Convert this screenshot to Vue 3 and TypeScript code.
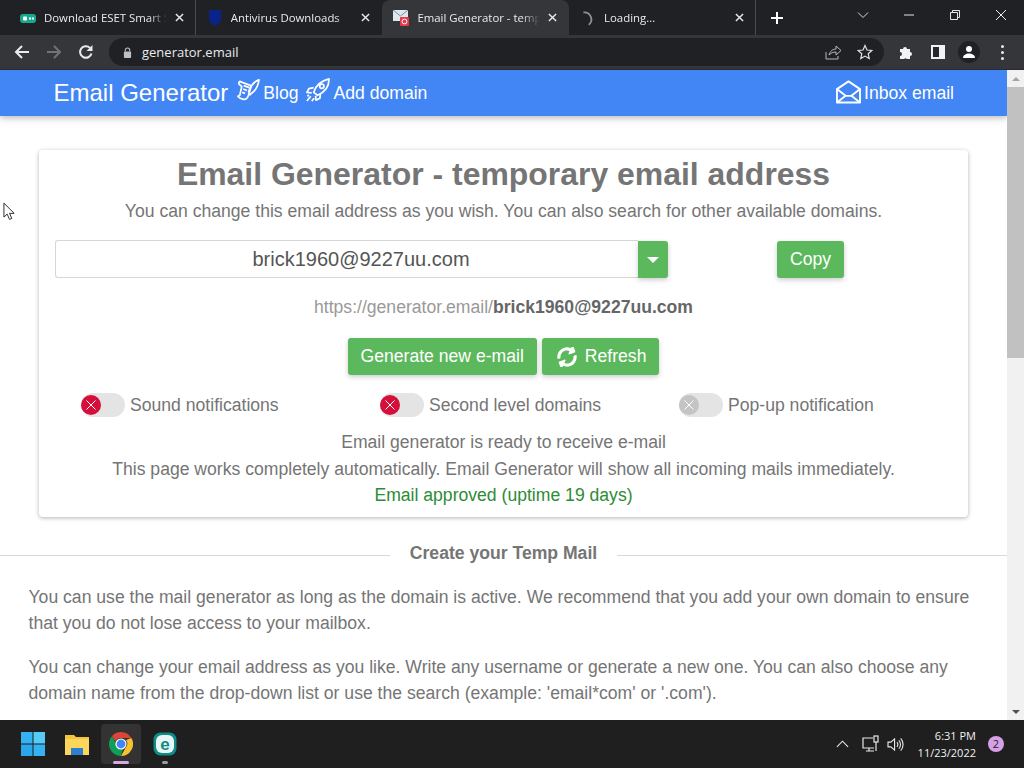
<script setup lang="ts">
interface BrowserTab {
  title: string;
  kind: 'eset' | 'shield' | 'mail' | 'spinner';
  active?: boolean;
}

const tabs: BrowserTab[] = [
  { title: 'Download ESET Smart Security', kind: 'eset' },
  { title: 'Antivirus Downloads', kind: 'shield' },
  { title: 'Email Generator - temporary email', kind: 'mail', active: true },
  { title: 'Loading...', kind: 'spinner' },
];

const toggles = [
  { label: 'Sound notifications', on: true },
  { label: 'Second level domains', on: true },
  { label: 'Pop-up notification', on: false },
];
</script>

<template>
  <div class="screen">
    <div class="tabbar">
      <div class="tabs">
        <div v-for="tab in tabs" :key="tab.title" class="tab" :class="{ active: tab.active }">
          <svg v-if="tab.kind === 'eset'" class="favicon" viewBox="0 0 16 16">
            <rect x="0" y="4" width="16" height="9" rx="3" fill="#17a98f" />
            <rect x="3" y="6.500" width="4" height="4" rx="1" fill="#fff" />
            <rect x="9" y="7.500" width="2" height="2" fill="#fff" />
            <rect x="12" y="7.500" width="2" height="2" fill="#fff" />
          </svg>
          <svg v-else-if="tab.kind === 'shield'" class="favicon" viewBox="0 0 16 16">
            <path d="M2 0h12v9c0 3-3 5-6 7-3-2-6-4-6-7z" fill="#0a2388" />
          </svg>
          <svg v-else-if="tab.kind === 'mail'" class="favicon" viewBox="0 0 16 16">
            <rect x="0" y="0" width="15" height="11" fill="#dfe6ee" />
            <path d="M0 0l7.500 6L15 0" fill="none" stroke="#7f8a96" />
            <rect x="7" y="7" width="9" height="9" rx="1" fill="#e53950" />
            <circle cx="11.500" cy="11.500" r="2.400" fill="none" stroke="#fff" />
          </svg>
          <svg v-else class="favicon" viewBox="0 0 16 16">
            <path d="M5 1.500a7 7 0 0 1 2 13.300" transform="rotate(-15 8 8)" fill="none" stroke="#8d9094" stroke-width="1.800" />
          </svg>
          <span class="tab-title">{{ tab.title }}</span>
          <svg class="tab-close" viewBox="0 0 10 10">
            <path d="M1 1l8 8M9 1l-8 8" stroke="#e8eaed" stroke-width="1.600" />
          </svg>
        </div>
        <svg class="new-tab" viewBox="0 0 12 12">
          <path d="M6 0v12M0 6h12" stroke="#fff" stroke-width="2" />
        </svg>
      </div>
      <div class="win-controls">
        <svg viewBox="0 0 12 12"><path d="M1 3.500l5 5 5-5" fill="none" stroke="#d8d8d8" /></svg>
        <svg viewBox="0 0 12 12"><path d="M1 6h10" stroke="#e6e6e6" /></svg>
        <svg viewBox="0 0 12 12"><path d="M1.500 3.500h7v7h-7zM3.500 3.500v-2h7v7h-2" fill="none" stroke="#e6e6e6" /></svg>
        <svg viewBox="0 0 12 12"><path d="M1 1l10 10M11 1L1 11" stroke="#f0f0f0" /></svg>
      </div>
    </div>

    <div class="toolbar">
      <svg class="tool-icon" viewBox="0 0 16 16"><path d="M15 8H2M8 2L2 8l6 6" fill="none" stroke="#e8eaed" stroke-width="2" /></svg>
      <svg class="tool-icon" viewBox="0 0 16 16"><path d="M1 8h13M8 2l6 6-6 6" fill="none" stroke="#6f7276" stroke-width="2" /></svg>
      <svg class="tool-icon" viewBox="0 0 16 16">
        <path d="M13.500 9.500A5.800 5.800 0 1 1 12 3.900" fill="none" stroke="#e8eaed" stroke-width="2" />
        <path d="M14.500 1v6h-6z" fill="#e8eaed" />
      </svg>
      <div class="omnibox">
        <svg class="lock" viewBox="0 0 10 12">
          <path d="M2.500 5V3.500a2.500 2.500 0 0 1 5 0V5" fill="none" stroke="#bdc1c6" stroke-width="1.200" />
          <rect x="1" y="5" width="8" height="7" rx="1" fill="#bdc1c6" />
        </svg>
        <span class="url">generator.email</span>
        <svg class="omni-icon" viewBox="0 0 16 16">
          <path d="M1 8v7h12v-3" fill="none" stroke="#b5b8bc" />
          <path d="M4 11c1-4 4-6 7-6V2l5 4.500L11 11V8c-3 0-5 1-7 3z" fill="none" stroke="#b5b8bc" />
        </svg>
        <svg class="omni-icon star" viewBox="0 0 16 16">
          <path d="M8 1.500l2 4.500 4.800.5-3.600 3.200 1 4.800L8 12.100l-4.200 2.400 1-4.800L1.200 6.500 6 6z" fill="none" stroke="#dfe1e5" stroke-width="1.200" />
        </svg>
      </div>
      <svg class="ext-icon puzzle" viewBox="0 0 16 16">
        <path d="M2 5h3a2 2 0 0 1 4 0h3v3a2 2 0 0 1 0 4v3H9a2 2 0 0 0-3 0H2v-3a2 2 0 0 0 0-4z" fill="#f1f3f4" />
      </svg>
      <svg class="ext-icon panel" viewBox="0 0 14 14">
        <path d="M0 0h14v14H0z" fill="#f1f3f4" />
        <path d="M2 2h6v10H2z" fill="#26282c" />
      </svg>
      <div class="avatar">
        <svg viewBox="0 0 14 14">
          <circle cx="7" cy="4" r="3" fill="#fff" />
          <path d="M1 13c0-3 3-4.500 6-4.500S13 10 13 13z" fill="#fff" />
        </svg>
      </div>
      <div class="kebab"><i></i><i></i><i></i></div>
    </div>

    <div class="viewport">
      <div class="page">
        <nav class="navbar">
          <div class="nav-left">
            <span class="brand">Email Generator</span>
            <a class="nav-link">
              <svg class="quill" viewBox="0 0 26 26" fill="none" stroke="#fff" stroke-width="1.800" stroke-linejoin="round">
                <path d="M6 4L17 8l-3 10c-1 3-3 5-6 4-2-.500-4-2-5-3l2-1 2-9-3-3c0-2 1-3 2-2z" />
                <path d="M9 8l6 2M8.500 11.500l4 1.500M7.500 15l3 1" />
                <path d="M14 15c1-5 5-11 11-13-1 6-3 11-8 14l-2 2" />
              </svg>
              Blog
            </a>
            <a class="nav-link">
              <svg class="rocket" viewBox="0 0 26 26" fill="none" stroke="#fff" stroke-width="1.800" stroke-linejoin="round">
                <path d="M9 15C11 8 17 3 25 1c0 8-5 14-12 17z" />
                <circle cx="17.500" cy="8.500" r="2.200" />
                <path d="M9 10l-5 1-2 4 5 .500M16 16.500l-.500 4.500-4 2-.500-4.500" />
                <path d="M6 19l-4 5M9.500 21l-2.500 3M2.500 19l1.500-1.500" />
              </svg>
              Add domain
            </a>
          </div>
          <a class="nav-link inbox">
            <svg class="envelope" viewBox="0 0 26 24" fill="none" stroke="#fff" stroke-width="2" stroke-linejoin="round">
              <path d="M1 9L13 1l12 8v14H1z" />
              <path d="M1 9l9 7h6l9-7M1 23l9-7M25 23l-9-7" />
            </svg>
            Inbox email
          </a>
        </nav>

        <main class="content">
          <section class="card">
            <h1>Email Generator - temporary email address</h1>
            <p class="lead">You can change this email address as you wish. You can also search for other available domains.</p>

            <div class="email-row">
              <div class="email-group">
                <div class="email-input">brick1960@9227uu.com</div>
                <button class="btn caret-btn" type="button"><span class="caret"></span></button>
              </div>
              <button class="btn copy-btn" type="button">Copy</button>
            </div>

            <p class="link-line">https://generator.email/<b>brick1960@9227uu.com</b></p>

            <div class="actions">
              <button class="btn action" type="button">Generate new e-mail</button>
              <button class="btn action" type="button">
                <svg class="refresh" viewBox="0 0 512 512">
                  <path fill="#fff" d="M370.720 133.280C339.458 104.008 298.888 87.962 255.848 88c-77.458.068-144.328 53.178-162.791 126.850-1.344 5.363-6.122 9.150-11.651 9.150H24.103c-7.498 0-13.194-6.807-11.807-14.176C33.933 94.924 134.813 8 256 8c66.448 0 126.791 26.136 171.315 68.685L463.030 40.970C478.149 25.851 504 36.559 504 57.941V192c0 13.255-10.745 24-24 24H345.941c-21.382 0-32.090-25.851-16.971-40.971l41.750-41.749zM32 296h134.059c21.382 0 32.090 25.851 16.971 40.971l-41.750 41.750c31.262 29.273 71.835 45.319 114.876 45.280 77.418-.070 144.315-53.144 162.787-126.849 1.344-5.363 6.122-9.150 11.651-9.150h57.304c7.498 0 13.194 6.807 11.807 14.176C478.067 417.076 377.187 504 256 504c-66.448 0-126.791-26.136-171.315-68.685L48.970 471.030C33.851 486.149 8 475.441 8 454.059V320c0-13.255 10.745-24 24-24z" transform="rotate(-20 256 256)" />
                </svg>
                Refresh
              </button>
            </div>

            <div class="toggles">
              <div v-for="item in toggles" :key="item.label" class="toggle-item">
                <span class="switch" :class="{ on: item.on }">
                  <span class="knob">
                    <svg viewBox="0 0 10 10"><path d="M0.500 0.500l9 9M9.500 0.500l-9 9" stroke="#fff" stroke-width="1" /></svg>
                  </span>
                </span>
                <span>{{ item.label }}</span>
              </div>
            </div>

            <div class="status">
              <p>Email generator is ready to receive e-mail</p>
              <p>This page works completely automatically. Email Generator will show all incoming mails immediately.</p>
              <p class="approved">Email approved (uptime 19 days)</p>
            </div>
          </section>

          <div class="divider"><span>Create your Temp Mail</span></div>

          <div class="article">
            <p>You can use the mail generator as long as the domain is active. We recommend that you add your own domain to ensure that you do not lose access to your mailbox.</p>
            <p>You can change your email address as you like. Write any username or generate a new one. You can also choose any domain name from the drop-down list or use the search (example: 'email*com' or '.com').</p>
          </div>
        </main>
      </div>

      <div class="scrollbar">
        <span class="arrow up"></span>
        <div class="thumb"></div>
        <span class="arrow down"></span>
      </div>

      <svg class="cursor" viewBox="0 0 14 20">
        <path d="M1 1v15l3.500-3.200 2.500 5.700 2.500-1-2.500-5.500h5z" fill="#fff" stroke="#222" stroke-width="1" />
      </svg>
    </div>

    <footer class="taskbar">
      <div class="task-apps">
        <div class="task-app">
          <svg class="app-icon" viewBox="0 0 24 24">
            <path d="M0 0h11.500v11.500H0z" fill="#35b2f2" />
            <path d="M12.500 0H24v11.500H12.500z" fill="#55cbf7" />
            <path d="M0 12.500h11.500V24H0z" fill="#2aa6ec" />
            <path d="M12.500 12.500H24V24H12.500z" fill="#35b2f2" />
          </svg>
        </div>
        <div class="task-app">
          <svg class="app-icon" viewBox="0 0 24 24">
            <path d="M0 3h9l2 2h13v18H0z" fill="#f4c63d" />
            <path d="M0 7h24v16H0z" fill="#fbd55c" />
            <path d="M6 16h12v7H6z" fill="#2f7fd1" />
          </svg>
        </div>
        <div class="task-app running">
          <svg class="app-icon" viewBox="0 0 24 24">
            <path d="M12 0a12 12 0 0 1 10.400 6H12a6 6 0 0 0-5.500 3.600L2.900 4.200A12 12 0 0 1 12 0z" fill="#db4437" />
            <path d="M22.400 6A12 12 0 0 1 12 24l4.800-8.500A6 6 0 0 0 17 8z" fill="#fbc02d" />
            <path d="M12 24A12 12 0 0 1 2.900 4.200l4.800 8.300a6 6 0 0 0 6.700 3.100L12 24z" fill="#0f9d58" />
            <circle cx="12" cy="12" r="5.600" fill="#fff" />
            <circle cx="12" cy="12" r="4.400" fill="#4285f4" />
          </svg>
          <span class="run-bar"></span>
        </div>
        <div class="task-app">
          <svg class="app-icon" viewBox="0 0 24 24">
            <rect x="0.500" y="0.500" width="23" height="23" rx="7" fill="#0d8c88" />
            <rect x="3" y="3" width="18" height="18" rx="6" fill="#eaf7f6" />
            <text x="12" y="18" text-anchor="middle" class="eset-e">e</text>
          </svg>
          <span class="run-dot"></span>
        </div>
      </div>
      <div class="tray">
        <svg class="tray-chevron" viewBox="0 0 14 8"><path d="M1 7l6-6 6 6" fill="none" stroke="#e8e8e8" stroke-width="1.200" /></svg>
        <svg class="tray-net" viewBox="0 0 18 18" fill="none" stroke="#e8e8e8" stroke-width="1.200">
          <path d="M11 3H1v10h11M4 16h8M7 13v3" />
          <rect x="12" y="1" width="4" height="6" />
          <path d="M14 7v9" />
        </svg>
        <svg class="tray-sound" viewBox="0 0 18 16" fill="none" stroke="#e8e8e8" stroke-width="1.200">
          <path d="M1 5.500h3L8 2v12l-4-3.500H1z" />
          <path d="M10.500 5.500a3.500 3.500 0 0 1 0 5M12.500 3.500a6.500 6.500 0 0 1 0 9M14.500 1.500a9.500 9.500 0 0 1 0 13" />
        </svg>
        <div class="clock">
          <span>6:31 PM</span>
          <span>11/23/2022</span>
        </div>
        <span class="badge">2</span>
      </div>
    </footer>
  </div>
</template>

<style scoped>
.screen {
  width: 1024px;
  height: 768px;
  display: flex;
  flex-direction: column;
  overflow: hidden;
  font-family: "Liberation Sans", Arial, sans-serif;
  background: #fff;
}

/* chrome */
.tabbar {
  height: 35px;
  flex: none;
  display: flex;
  justify-content: space-between;
  background: #202124;
}

.tabs {
  display: flex;
  align-items: center;
  padding-left: 9px;
}

.tab {
  width: 186.700px;
  height: 35px;
  padding: 0 8px 0 11px;
  box-sizing: border-box;
  display: flex;
  align-items: center;
  gap: 8px;
  color: #e8eaed;
  font: 11.400px "Open Sans", "Noto Sans", sans-serif;
  border-right: 1px solid #4a4c50;
  background-clip: padding-box;
}

.tab:nth-child(2),
.tab.active {
  border-right-color: transparent;
}

.tab.active {
  background: #35363a;
  border-radius: 8px 8px 0 0;
}

.favicon {
  width: 16px;
  height: 16px;
  flex: none;
}

.tab-title {
  flex: 1;
  min-width: 0;
  white-space: nowrap;
  overflow: hidden;
  -webkit-mask-image: linear-gradient(90deg, #000 85%, transparent);
  mask-image: linear-gradient(90deg, #000 85%, transparent);
}

.tab-close {
  width: 9px;
  height: 9px;
  flex: none;
  margin-right: 3px;
}

.new-tab {
  width: 12px;
  height: 12px;
  margin-left: 15px;
}

.win-controls {
  display: flex;
  align-items: center;
  gap: 34px;
  padding: 0 17px 6px 0;
}

.win-controls svg {
  width: 12px;
  height: 12px;
}

.toolbar {
  height: 35px;
  flex: none;
  display: flex;
  align-items: center;
  padding-left: 14px;
  background: #35363a;
  box-sizing: border-box;
  border-bottom: 1px solid #2a2b2e;
}

.tool-icon {
  width: 16px;
  height: 16px;
  margin-right: 16px;
}

.omnibox {
  width: 775px;
  height: 28px;
  margin-left: -1px;
  padding: 0 10px 0 14px;
  box-sizing: border-box;
  display: flex;
  align-items: center;
  border-radius: 14px;
  background: #202124;
}

.lock {
  width: 9px;
  height: 11px;
  margin-right: 10px;
}

.url {
  flex: 1;
  color: #e8eaed;
  font: 13px "Open Sans", "Noto Sans", sans-serif;
}

.omni-icon {
  width: 16px;
  height: 16px;
}

.star {
  margin-left: 16px;
  margin-right: 1px;
}

.ext-icon {
  flex: none;
}

.puzzle {
  width: 16px;
  height: 16px;
  margin-left: 14px;
}

.panel {
  width: 14px;
  height: 14px;
  margin-left: 17px;
}

.avatar {
  width: 22px;
  height: 22px;
  margin-left: 13px;
  border-radius: 50%;
  background: #202124;
  display: flex;
  align-items: center;
  justify-content: center;
}

.avatar svg {
  width: 14px;
  height: 14px;
}

.kebab {
  display: flex;
  flex-direction: column;
  gap: 3px;
  margin-left: 21px;
}

.kebab i {
  width: 3px;
  height: 3px;
  border-radius: 50%;
  background: #e8eaed;
}

/* page */
.viewport {
  position: relative;
  flex: 1;
  min-height: 0;
  display: flex;
  overflow: hidden;
}

.page {
  flex: 1;
  min-width: 0;
  overflow: hidden;
  color: #757575;
}

.navbar {
  height: 46px;
  padding: 0 53px 0 53.500px;
  display: flex;
  align-items: center;
  justify-content: space-between;
  background: #4285f4;
  box-shadow: 0 2px 5px rgba(0, 0, 0, 0.16), 0 2px 10px rgba(0, 0, 0, 0.12);
  color: #fff;
}

.nav-left {
  display: flex;
  align-items: center;
}

.brand {
  font-size: 24px;
  margin-right: 7px;
}

.nav-link {
  display: flex;
  align-items: center;
  font-size: 17.600px;
  margin-right: 7px;
}

.inbox {
  margin-right: 0;
}

.quill,
.rocket {
  width: 25px;
  height: 25px;
  margin-right: 3px;
  margin-top: -5px;
}

.envelope {
  width: 25px;
  height: 24px;
  margin-right: 3px;
  margin-top: -3px;
}

.content {
  padding-top: 34px;
}

.card {
  width: 929px;
  margin: 0 auto;
  padding: 5px 16px 8px;
  box-sizing: border-box;
  border-radius: 4px;
  text-align: center;
  background: #fff;
  box-shadow: 0 1px 4px rgba(0, 0, 0, 0.3);
}

h1 {
  margin: 0;
  font-size: 31.950px;
  line-height: 38px;
  font-weight: 700;
}

.lead {
  margin: 5px 0 0;
  font-size: 17.600px;
  line-height: 26px;
}

.email-row {
  display: flex;
  margin-top: 16px;
}

.email-group {
  display: flex;
  width: 613px;
}

.email-input {
  flex: 1;
  height: 38px;
  padding-left: 28px;
  box-sizing: border-box;
  border: 1px solid #d6d6d6;
  border-right: none;
  border-radius: 3px 0 0 3px;
  color: #555;
  font-size: 20px;
  line-height: 36px;
}

.btn {
  border: none;
  border-radius: 3px;
  background: #5cb85c;
  color: #fff;
  font-family: inherit;
  font-size: 17.600px;
  padding: 0;
  box-shadow: 0 2px 5px rgba(0, 0, 0, 0.2);
}

.caret-btn {
  width: 30px;
  height: 37px;
  margin-top: 1px;
  border-radius: 0 3px 3px 0;
  display: flex;
  align-items: center;
  justify-content: center;
}

.caret {
  border-top: 6px solid #fff;
  border-left: 6px solid transparent;
  border-right: 6px solid transparent;
}

.copy-btn {
  width: 67px;
  height: 37px;
  margin-left: 109px;
  margin-top: 1px;
}

.link-line {
  margin: 16px 0 0;
  font-size: 17.600px;
  line-height: 26px;
  color: #999;
}

.link-line b {
  color: #666;
}

.actions {
  display: flex;
  justify-content: center;
  gap: 5px;
  margin-top: 18px;
}

.action {
  height: 37px;
  padding: 0 13px;
  display: flex;
  align-items: center;
  gap: 8px;
}

.refresh {
  width: 20px;
  height: 20px;
  margin-left: 2px;
}

.toggles {
  display: flex;
  margin: 17px 0 0 26px;
}

.toggle-item {
  width: 299px;
  flex: none;
  display: flex;
  align-items: center;
  gap: 5px;
  font-size: 17.600px;
  line-height: 26px;
}

.switch {
  width: 44px;
  height: 24px;
  border-radius: 12px;
  background: #e4e4e4;
  display: flex;
  align-items: center;
  box-sizing: border-box;
}

.knob {
  width: 20px;
  height: 20px;
  border-radius: 50%;
  background: #c4c4c4;
  display: flex;
  align-items: center;
  justify-content: center;
}

.switch.on .knob {
  background: #d50f3a;
}

.knob svg {
  width: 10px;
  height: 10px;
}

.status {
  margin-top: 11.400px;
  font-size: 17.600px;
  line-height: 26.400px;
}

.status p {
  margin: 0;
}

.status .approved {
  color: #2e8b35;
}

.divider {
  position: relative;
  margin-top: 26px;
  height: 22px;
  display: flex;
  justify-content: center;
  align-items: center;
  font-size: 17.600px;
  font-weight: 700;
}

.divider::before {
  content: "";
  position: absolute;
  left: 0;
  right: 0;
  top: calc(50% + 1px);
  border-top: 1px solid #d8d8d8;
}

.divider span {
  position: relative;
  padding: 0 20px;
  background: #fff;
}

.article {
  padding: 1px 28.500px 0;
  font-size: 17.600px;
  line-height: 26px;
}

.article p {
  margin: 18px 0 0;
}

.scrollbar {
  width: 17px;
  flex: none;
  display: flex;
  flex-direction: column;
  align-items: center;
  background: #f1f1f1;
}

.arrow {
  height: 17px;
  flex: none;
  display: flex;
  align-items: center;
}

.arrow::before {
  content: "";
  border-left: 4px solid transparent;
  border-right: 4px solid transparent;
}

.arrow.up::before {
  border-bottom: 4px solid #a3a3a3;
}

.arrow.down {
  margin-top: auto;
}

.arrow.down::before {
  border-top: 4px solid #505050;
}

.thumb {
  width: 100%;
  height: 271px;
  background: #c1c1c1;
}

.cursor {
  position: absolute;
  left: 3px;
  top: 132px;
  width: 13px;
  height: 19px;
}

/* taskbar */
.taskbar {
  height: 48px;
  flex: none;
  display: flex;
  justify-content: space-between;
  background: #1f1f1f;
}

.task-apps {
  display: flex;
  padding: 4px 0 0 13px;
}

.task-app {
  position: relative;
  width: 40px;
  height: 40px;
  margin-right: 4px;
  display: flex;
  align-items: center;
  justify-content: center;
  border-radius: 4px;
}

.task-app.running {
  background: #333;
}

.app-icon {
  width: 24px;
  height: 24px;
}

.eset-e {
  font: 700 17px "Liberation Sans", sans-serif;
  fill: #0d8c88;
}

.run-bar,
.run-dot {
  position: absolute;
  bottom: 0;
  left: 50%;
  height: 3px;
  border-radius: 2px;
  transform: translateX(-50%);
}

.run-bar {
  width: 16px;
  background: #d6a9e6;
}

.run-dot {
  width: 6px;
  background: #9a9a9a;
}

.tray {
  display: flex;
  align-items: center;
  color: #f2f2f2;
}

.tray-chevron {
  width: 13px;
  height: 8px;
  margin-right: 13px;
}

.tray-net {
  width: 18px;
  height: 18px;
  margin-right: 7px;
}

.tray-sound {
  width: 17px;
  height: 15px;
  margin-right: 14px;
}

.clock {
  display: flex;
  flex-direction: column;
  align-items: flex-end;
  font: 11px/17px "Open Sans", "Noto Sans", sans-serif;
}

.badge {
  width: 16px;
  height: 16px;
  margin: 0 20px 0 12px;
  border-radius: 50%;
  background: #d6a0e6;
  color: #222;
  font: 11px/16px "Open Sans", sans-serif;
  text-align: center;
}
</style>
